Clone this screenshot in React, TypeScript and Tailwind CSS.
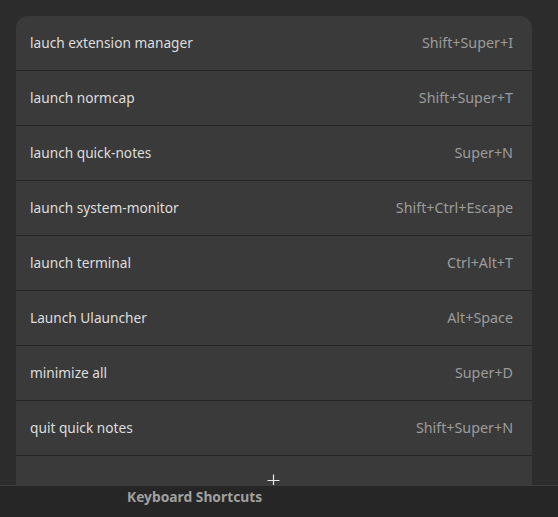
import React from "react";

const rows: [string, string][] = [
  ["lauch extension manager", "Shift+Super+I"],
  ["launch normcap", "Shift+Super+T"],
  ["launch quick-notes", "Super+N"],
  ["launch system-monitor", "Shift+Ctrl+Escape"],
  ["launch terminal", "Ctrl+Alt+T"],
  ["Launch Ulauncher", "Alt+Space"],
  ["minimize all", "Super+D"],
  ["quit quick notes", "Shift+Super+N"],
];

export default function App() {
  return (
    <div
      className="w-[558px] h-[517px] flex flex-col bg-[#2c2c2c] overflow-hidden"
      style={{ fontFamily: '"Noto Sans", "Open Sans", sans-serif' }}
    >
      <div className="h-[485px] overflow-hidden pl-4 pr-[26px] pt-4">
        <div className="rounded-t-[12px] bg-[#3a3a3a] flex flex-col">
          {rows.map(([name, key]) => (
            <div
              key={name}
              className="h-[55px] border-b border-[#262626] flex items-center justify-between pl-[14px] pr-[19px]"
            >
              <span className="text-[13.7px] text-[#dedede]">{name}</span>
              <span className="text-[14.3px] text-[#9c9c9c]">{key}</span>
            </div>
          ))}
          <div className="h-[55px] flex justify-center pt-[18px]">
            <svg width="13" height="13" viewBox="0 0 13 13" className="-ml-[2px]">
              <path d="M6.5 0.5v12M0.5 6.5h12" stroke="#e8e8e8" strokeWidth="1.2" />
            </svg>
          </div>
        </div>
      </div>
      <div className="h-[32px] bg-[#262626] border-t border-[#3c3c3c] flex items-start pt-[1px] pl-[127px]">
        <span className="text-[13.8px] leading-[20px] font-bold text-[#a0a0a0]">Keyboard Shortcuts</span>
      </div>
    </div>
  );
}
